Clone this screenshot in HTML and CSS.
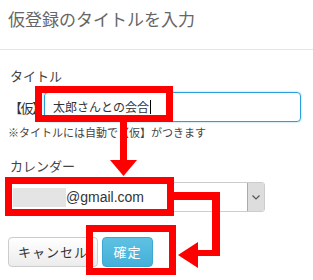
FILE: index.html
```html
<!DOCTYPE html>
<html lang="ja">
<head>
    <meta charset="UTF-8">
    <title>仮登録</title>
    <link rel="stylesheet" href="styles.css">
</head>
<body>
    <div class="dialog">
        <div class="dialog__head">仮登録のタイトルを入力</div>
        <div class="dialog__body">
            <div class="field__label">タイトル</div>
            <div class="field__row">
                <span class="prefix">【仮】</span>
                <div class="input">太郎さんとの会合<span class="caret"></span></div>
            </div>
            <div class="hint">※タイトルには自動で【仮】がつきます</div>

            <div class="field__label field__label--gap">カレンダー</div>
            <div class="select">
                <div class="select__value"><span class="blur"></span>@gmail.com</div>
                <div class="select__btn">
                    <svg width="8" height="5" viewBox="0 0 8 5"><path d="M0.5 0.5 L4 4 L7.5 0.5" fill="none" stroke="#555" stroke-width="1.2"/></svg>
                </div>
            </div>

            <div class="actions">
                <div class="btn btn--cancel">キャンセル</div>
                <div class="btn btn--ok">確定</div>
            </div>
        </div>

        <!-- red annotation marks over the form -->
        <svg class="marks" width="313" height="280">
            <g fill="none" stroke="#f00" stroke-width="7">
                <rect x="38.5" y="89.5" width="131" height="29"/>
                <rect x="8.5" y="180.5" width="162" height="32"/>
                <rect x="89.5" y="228.5" width="83" height="43"/>
            </g>
            <g fill="#f00">
                <rect x="120" y="121" width="7" height="40"/>
                <polygon points="110,160 137,160 123.5,176"/>
                <rect x="173" y="192" width="47" height="8"/>
                <rect x="212" y="192" width="8" height="64"/>
                <rect x="195" y="250" width="25" height="6"/>
                <polygon points="178,255 198,242 198,268"/>
            </g>
        </svg>
    </div>
</body>
</html>
```

FILE: styles.css
```css
body {
    margin: 0;
    padding: 0;
    background: #fff;
    font-family: "Noto Sans CJK JP", "Liberation Sans", sans-serif;
    color: #333;
}

.dialog {
    position: relative;
    width: 313px;
    height: 280px;
    overflow: hidden;
}

.dialog__head {
    padding: 8px 8px 0;
    height: 41px;
    line-height: 22px;
    font-size: 17px;
    color: #666;
    border-bottom: 1px solid #e5e5e5;
}

.dialog__body {
    padding: 17px 12px 0 8px;
}

.field__label {
    font-size: 13px;
    line-height: 18px;
    padding-left: 2px;
    color: #444;
}
.field__label--gap {
    margin-top: 17px;
}

.field__row {
    display: flex;
    align-items: center;
    margin-top: 7px;
}

.prefix {
    width: 35px;
    font-size: 13px;
    letter-spacing: -1.5px;
    margin-left: 1px;
}

.input {
    flex: 1;
    height: 30px;
    box-sizing: border-box;
    border: 1px solid #2b9fd9;
    border-radius: 4px;
    box-shadow: 0 0 2px rgba(43, 159, 217, 0.6);
    padding: 0 8px;
    font-size: 12px;
    line-height: 28px;
    display: flex;
    align-items: center;
}
.caret {
    display: inline-block;
    width: 1px;
    height: 14px;
    background: #000;
    margin-left: 1px;
}

.hint {
    margin-top: 2px;
    font-size: 11px;
    line-height: 16px;
    color: #444;
}

.select {
    display: flex;
    width: 257px;
    height: 30px;
    box-sizing: border-box;
    margin-top: 7px;
    border: 1px solid #ccc;
    border-radius: 3px;
    background: #fff;
}
.select__value {
    flex: 1;
    display: flex;
    align-items: center;
    padding-left: 4px;
    font-family: "Liberation Sans", sans-serif;
    font-size: 14px;
    color: #333;
}
.blur {
    display: inline-block;
    width: 53px;
    height: 19px;
    background: #e4e4e4;
}
.select__btn {
    width: 16px;
    display: flex;
    align-items: center;
    justify-content: center;
    background: #ddd;
    border-left: 1px solid #aaa;
    border-radius: 0 2px 2px 0;
}

.actions {
    display: flex;
    gap: 4px;
    margin-top: 25px;
}

.btn {
    height: 30px;
    box-sizing: border-box;
    border-radius: 4px;
    font-size: 13px;
    line-height: 28px;
    text-align: center;
}
.btn--cancel {
    width: 90px;
    border: 1px solid #ccc;
    background: linear-gradient(#fff, #ececec);
    color: #333;
    letter-spacing: 1px;
}
.btn--ok {
    width: 51px;
    border: 1px solid #3ba8d2;
    background: linear-gradient(#5fc1e2, #44b0da);
    color: #fff;
    letter-spacing: 1px;
}

.marks {
    position: absolute;
    top: 0;
    left: 0;
}
```
